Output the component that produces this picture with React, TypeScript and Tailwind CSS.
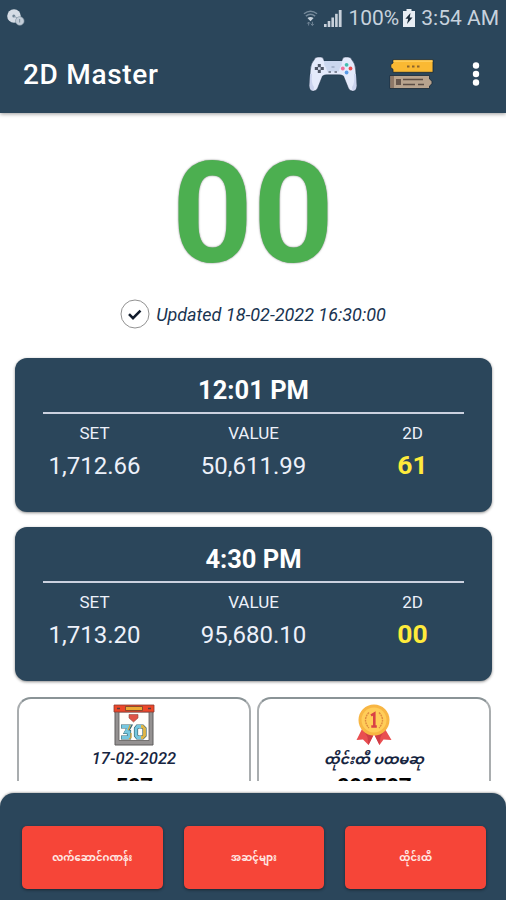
// src/App.tsx
import React from 'react'

interface Session {
  time: string
  set: string
  value: string
  result: string
}

const sessions: Session[] = [
  { time: '12:01 PM', set: '1,712.66', value: '50,611.99', result: '61' },
  { time: '4:30 PM', set: '1,713.20', value: '95,680.10', result: '00' },
]

const actions = ['လက်ဆောင်ဂဏန်း', 'အဆင့်များ', 'ထိုင်းထီ']

const ChatIcon = () => (
  <svg width="18" height="18" viewBox="0 0 18 18">
    <circle cx="7" cy="7" r="6.8" fill="#d5dce5" />
    <circle cx="6.800" cy="7" r="1.500" fill="#6f8394" />
    <path d="M7 7l3 2" stroke="#8fa0af" strokeWidth="1" />
    <circle cx="12.800" cy="12" r="4.300" fill="#c3cdd8" stroke="#7d909f" strokeWidth=".6" />
    <path d="M12.600 10v3.500" stroke="#8496a5" strokeWidth="1.200" />
  </svg>
)

const WifiIcon = () => (
  <svg width="15" height="18" viewBox="0 0 16 18" fill="none">
    <path d="M1 4.500Q8-.8 15 4.500M3 7Q8 3 13 7" stroke="#75899a" strokeWidth="1.500" />
    <path d="M4.700 9Q8 6.600 11.300 9L8 12.500z" fill="#c7d1db" />
    <path d="M6 17v-3.500M4.500 15L6 13.300 7.500 15M10 13v3.800M8.500 15.300l1.500 1.700 1.500-1.700" stroke="#75899a" />
  </svg>
)

const SignalIcon = () => (
  <svg width="18" height="18" viewBox="0 0 18 18" fill="#c8d1db">
    <rect x="0" y="15" width="2.600" height="3" />
    <rect x="3.700" y="12" width="2.600" height="6" />
    <rect x="7.400" y="8.500" width="2.600" height="9.500" />
    <rect x="11.100" y="4.800" width="2.600" height="13.200" />
    <rect x="14.800" y="1" width="2.800" height="17" />
  </svg>
)

const BatteryIcon = () => (
  <svg width="12" height="18" viewBox="0 0 12 18">
    <path d="M3.500 0h5v2H12v16H0V2h3.500z" fill="#e8edf3" />
    <path d="M7.500 4L2.400 9.800h2.800L4 15l5.500-6.500H6.700z" fill="#1b2c3b" />
  </svg>
)

const GamepadIcon = () => (
  <svg width="48" height="36" viewBox="0 0 48 36">
    <path
      d="M5 4Q6 .8 9 1h3q2.500 0 3.200 4h17.600q.7-4 3.200-4h3q3 0 4 3 3.200 3 3.700 10l1 15.500q0 5.500-4.200 5.500-3 0-4.200-3L34.500 20q-2.200-1.400-4.800-1.200H18.300q-2.600-.2-4.800 1.200L8.700 32q-1.200 3-4.200 3Q.3 35 .3 29.500L1.300 14Q1.800 7 5 4z"
      fill="#e4eafb"
      stroke="#1c3144"
      strokeWidth=".5"
    />
    <path d="M15.200 5h17.600v4q-2 2-3 6.500H18.200q-1-4.500-3-6.500z" fill="#cbd7ef" />
    <path d="M1 18L.6 30q.2 4.500 3.900 4.700L5 31q-3-3-2-13zM47 18l.4 12q-.2 4.500-3.900 4.700L43 31q3-3 2-13z" fill="#cbd3ee" />
    <path d="M8.800 8h3v3h3v3h-3v3h-3v-3h-3v-3h3z" fill="#4d5565" />
    <rect x="9" y="11.200" width="2.600" height="2.600" fill="#dbe2f3" />
    <circle cx="37.600" cy="8.800" r="1.900" fill="#43bfb0" />
    <circle cx="33.800" cy="12.500" r="1.900" fill="#ef719c" />
    <circle cx="41.500" cy="12.500" r="1.900" fill="#ef4f50" />
    <circle cx="37.600" cy="16.500" r="1.900" fill="#5a9be8" />
    <path d="M19.500 16h2.500M25.500 16h2.500" stroke="#606879" strokeWidth="1.600" />
    <path d="M22.500 11h3" stroke="#9caac4" strokeWidth="1.500" />
  </svg>
)

const TicketsIcon = () => (
  <svg width="46" height="31" viewBox="0 0 46 31">
    <path d="M4 .8h40v12.500H4v-3L1.800 8.500V5.500L4 4z" fill="#fab933" stroke="#172635" strokeWidth=".8" />
    <path d="M4.500 1.300h39V3h-39z" fill="#ffcc57" />
    <path d="M18 7.500h2.500M23 7.500h2.500M28 7.500h2.500" stroke="#8b642d" strokeWidth="1.800" />
    <path d="M1 16.500h39.500V20l2.500 2.200v2.600L40.500 27v2.500H1z" fill="#b8a38e" stroke="#172635" strokeWidth=".8" />
    <path d="M1.500 17h3.500v12H1.500z" fill="#8e7868" />
    <path d="M7 20h5v6H7z" fill="#66564d" />
    <path d="M14 20.500h20M14 25.500h12M29 25.500h6" stroke="#5a4c45" strokeWidth="1.300" />
  </svg>
)

const CalendarIcon = () => (
  <svg width="42" height="42" viewBox="0 0 42 42">
    <path d="M2 5h38v36H2z" fill="#949191" stroke="#5f5c5c" />
    <path d="M6 8h30v28.500H6z" fill="#fffefa" stroke="#5e5a5a" strokeWidth=".8" />
    <path d="M1 1h40v7H1z" fill="#ed4729" stroke="#8a3b32" strokeWidth=".8" />
    <path d="M12.500 2.500h17v4h-17z" fill="#eca932" stroke="#753f2d" strokeWidth=".8" />
    <path d="M4 4.500h3M35 4.500h3" stroke="#563d41" strokeWidth="1.500" />
    <path d="M16 10.500h9v3.500L20.500 18 16 14z" fill="#df5447" stroke="#8e4940" strokeWidth=".6" />
    <g fill="none">
      <path d="M8 22.500h8.500L13.500 28H16v5.500H8" stroke="#34616d" strokeWidth="4.200" />
      <path d="M8.500 22.500h7.500L13 28h3v5.500H8.500" stroke="#76c7df" strokeWidth="2.900" />
      <path d="M17.200 21l-2 5M18 29v4.500l-2 1.500" stroke="#d1a63d" strokeWidth="1.300" />
      <path d="M24.500 22.500h5l2 2v7l-2 2h-5l-1.500-2v-7z" stroke="#34616d" strokeWidth="4.200" />
      <path d="M28 22.500h-3.500l-1.500 2v7l1.500 2H28" stroke="#76c7df" strokeWidth="2.900" />
      <path d="M28 22.500h1.500l2 2v7l-2 2H28" stroke="#e0b646" strokeWidth="2.900" />
    </g>
  </svg>
)

const MedalIcon = () => (
  <svg width="36" height="42" viewBox="0 0 36 42">
    <path d="M6 25L.5 36l6.500-.5L12.500 41 18 30l5.500 11 4-5.500 8 .5L29 25z" fill="#e94e50" />
    <path d="M8 27l9 5-4.500 9-1-8zM28 27l-9 5 4.500 9 1-8z" fill="#cf3c46" />
    <circle cx="18" cy="16" r="15.500" fill="#f8b643" />
    <circle cx="18" cy="16" r="12.500" fill="#ffcd59" />
    <path d="M13 8.500Q6 16 13 24M23 8.500Q30 16 23 24" stroke="#df8b3f" strokeWidth="1.400" strokeDasharray="2 .7" fill="none" />
    <path d="M15 11.500l3.300-2V22M15.300 22.500h5.500" stroke="#d94146" strokeWidth="2.600" fill="none" />
  </svg>
)

const SessionCard: React.FC<{ session: Session }> = ({ session }) => (
  <section className="h-[154px] shrink-0 rounded-xl bg-[#2b465b] px-7 pt-[17px] text-[#edf1fa] shadow-[0_1px_3px_rgba(0,0,0,0.45)]">
    <h2 className="text-center text-[25.500px] leading-[30px] font-bold text-white">{session.time}</h2>
    <div className="mt-[7px] h-[2.500px] bg-[#cbd1df]" />
    <div className="-mx-7 grid grid-cols-3 text-center">
      {[
        { label: 'SET', value: session.set },
        { label: 'VALUE', value: session.value },
        { label: '2D', value: session.result },
      ].map((cell) => (
        <div key={cell.label}>
          <div className="mt-[9px] text-[17px] leading-5">{cell.label}</div>
          <div
            className={
              cell.label === '2D'
                ? 'mt-[7px] text-[26.500px] leading-[30px] font-bold text-[#ffeb3b]'
                : 'mt-[8px] text-[24px] leading-[30px]'
            }
          >
            {cell.value}
          </div>
        </div>
      ))}
    </div>
  </section>
)

const App: React.FC = () => {
  return (
    <div className="flex h-[900px] w-[506px] flex-col overflow-hidden bg-white font-[Roboto,'Noto_Sans_Myanmar',sans-serif]">
      <header className="relative h-[113px] shrink-0 bg-[#2b465b] shadow-[0_1px_4px_rgba(0,0,0,0.4)]">
        <div className="flex h-9 items-center justify-between pr-[7px] pl-[7px] text-[#c7d2dd]">
          <ChatIcon />
          <div className="flex items-center text-[21px] leading-9">
            <WifiIcon />
            <span className="ml-1.5"><SignalIcon /></span>
            <span className="ml-1.5">100%</span>
            <span className="mr-1.5 ml-1"><BatteryIcon /></span>
            <span>3:54 AM</span>
          </div>
        </div>
        <div className="flex h-[76px] items-center pl-[23px]">
          <h1 className="flex-1 pt-[2px] text-[28px] font-medium tracking-[0.7px] text-white">2D Master</h1>
          <GamepadIcon />
          <span className="ml-8"><TicketsIcon /></span>
          <svg className="mr-[25px] ml-9" width="10" height="24" viewBox="0 0 10 24" fill="#fff">
            <circle cx="5" cy="3.500" r="3.200" />
            <circle cx="5" cy="12" r="3.200" />
            <circle cx="5" cy="20.500" r="3.200" />
          </svg>
        </div>
      </header>

      <main className="flex h-[668px] shrink-0 flex-col overflow-hidden">
        <div className="mt-[31px] h-[140px] text-center text-[141px] leading-[140px] font-bold text-[#4caf50] [text-shadow:0_0_2px_#777]">00</div>
        <div className="mt-[15px] flex h-[32px] items-center justify-center gap-[6px]">
          <svg width="30" height="30" viewBox="0 0 30 30" fill="none">
            <circle cx="15" cy="15" r="14" stroke="#858585" strokeWidth=".9" />
            <path d="M9 15.200l4 4 7.500-7.500" stroke="#101b2b" strokeWidth="2.600" />
          </svg>
          <span className="text-[18px] text-[#193451] italic">Updated 18-02-2022 16:30:00</span>
        </div>

        <div className="mt-[28.500px] mr-[14px] ml-[15px] flex flex-col gap-[15px]">
          {sessions.map((session) => (
            <SessionCard key={session.time} session={session} />
          ))}
        </div>

        <div className="mt-[16.500px] mr-[15px] ml-[17px] grid shrink-0 grid-cols-2 gap-[6px] text-center">
          <section className="flex h-[150px] flex-col items-center rounded-[14px] border-2 border-[#a9adaf] border-t-[#8a9396] pt-[5px]">
            <CalendarIcon />
            <div className="mt-[1px] text-[16.500px] leading-6 font-medium tracking-[0.1px] text-[#172541] italic">17-02-2022</div>
            <div className="text-[22.500px] leading-[30px] font-bold tracking-[-0.5px] text-black">507</div>
          </section>
          <section className="flex h-[150px] flex-col items-center rounded-[14px] border-2 border-[#a9adaf] border-t-[#8a9396] pt-[5px]">
            <MedalIcon />
            <div className="mt-[1px] h-6 text-[14px] leading-6 font-bold whitespace-nowrap text-[#172541] italic">ထိုင်းထီ ပထမဆု</div>
            <div className="text-[22.500px] leading-[30px] font-bold tracking-[-0.5px] text-black">098597</div>
          </section>
        </div>
      </main>

      <footer className="mt-auto h-[107px] shrink-0 rounded-t-[14px] bg-[#2b465b] pt-[33px] pr-[20px] pl-[22px] shadow-[0_-1px_2px_rgba(0,0,0,0.25)]">
        <div className="grid grid-cols-3 gap-[21px]">
          {actions.map((label) => (
            <button
              key={label}
              className="h-[63px] rounded-[5px] bg-[#f64538] text-[10px] font-bold whitespace-nowrap text-[#ffe7e2] shadow-[0_1px_3px_rgba(0,0,0,0.45)]"
            >
              {label}
            </button>
          ))}
        </div>
      </footer>
    </div>
  )
}

export default App
